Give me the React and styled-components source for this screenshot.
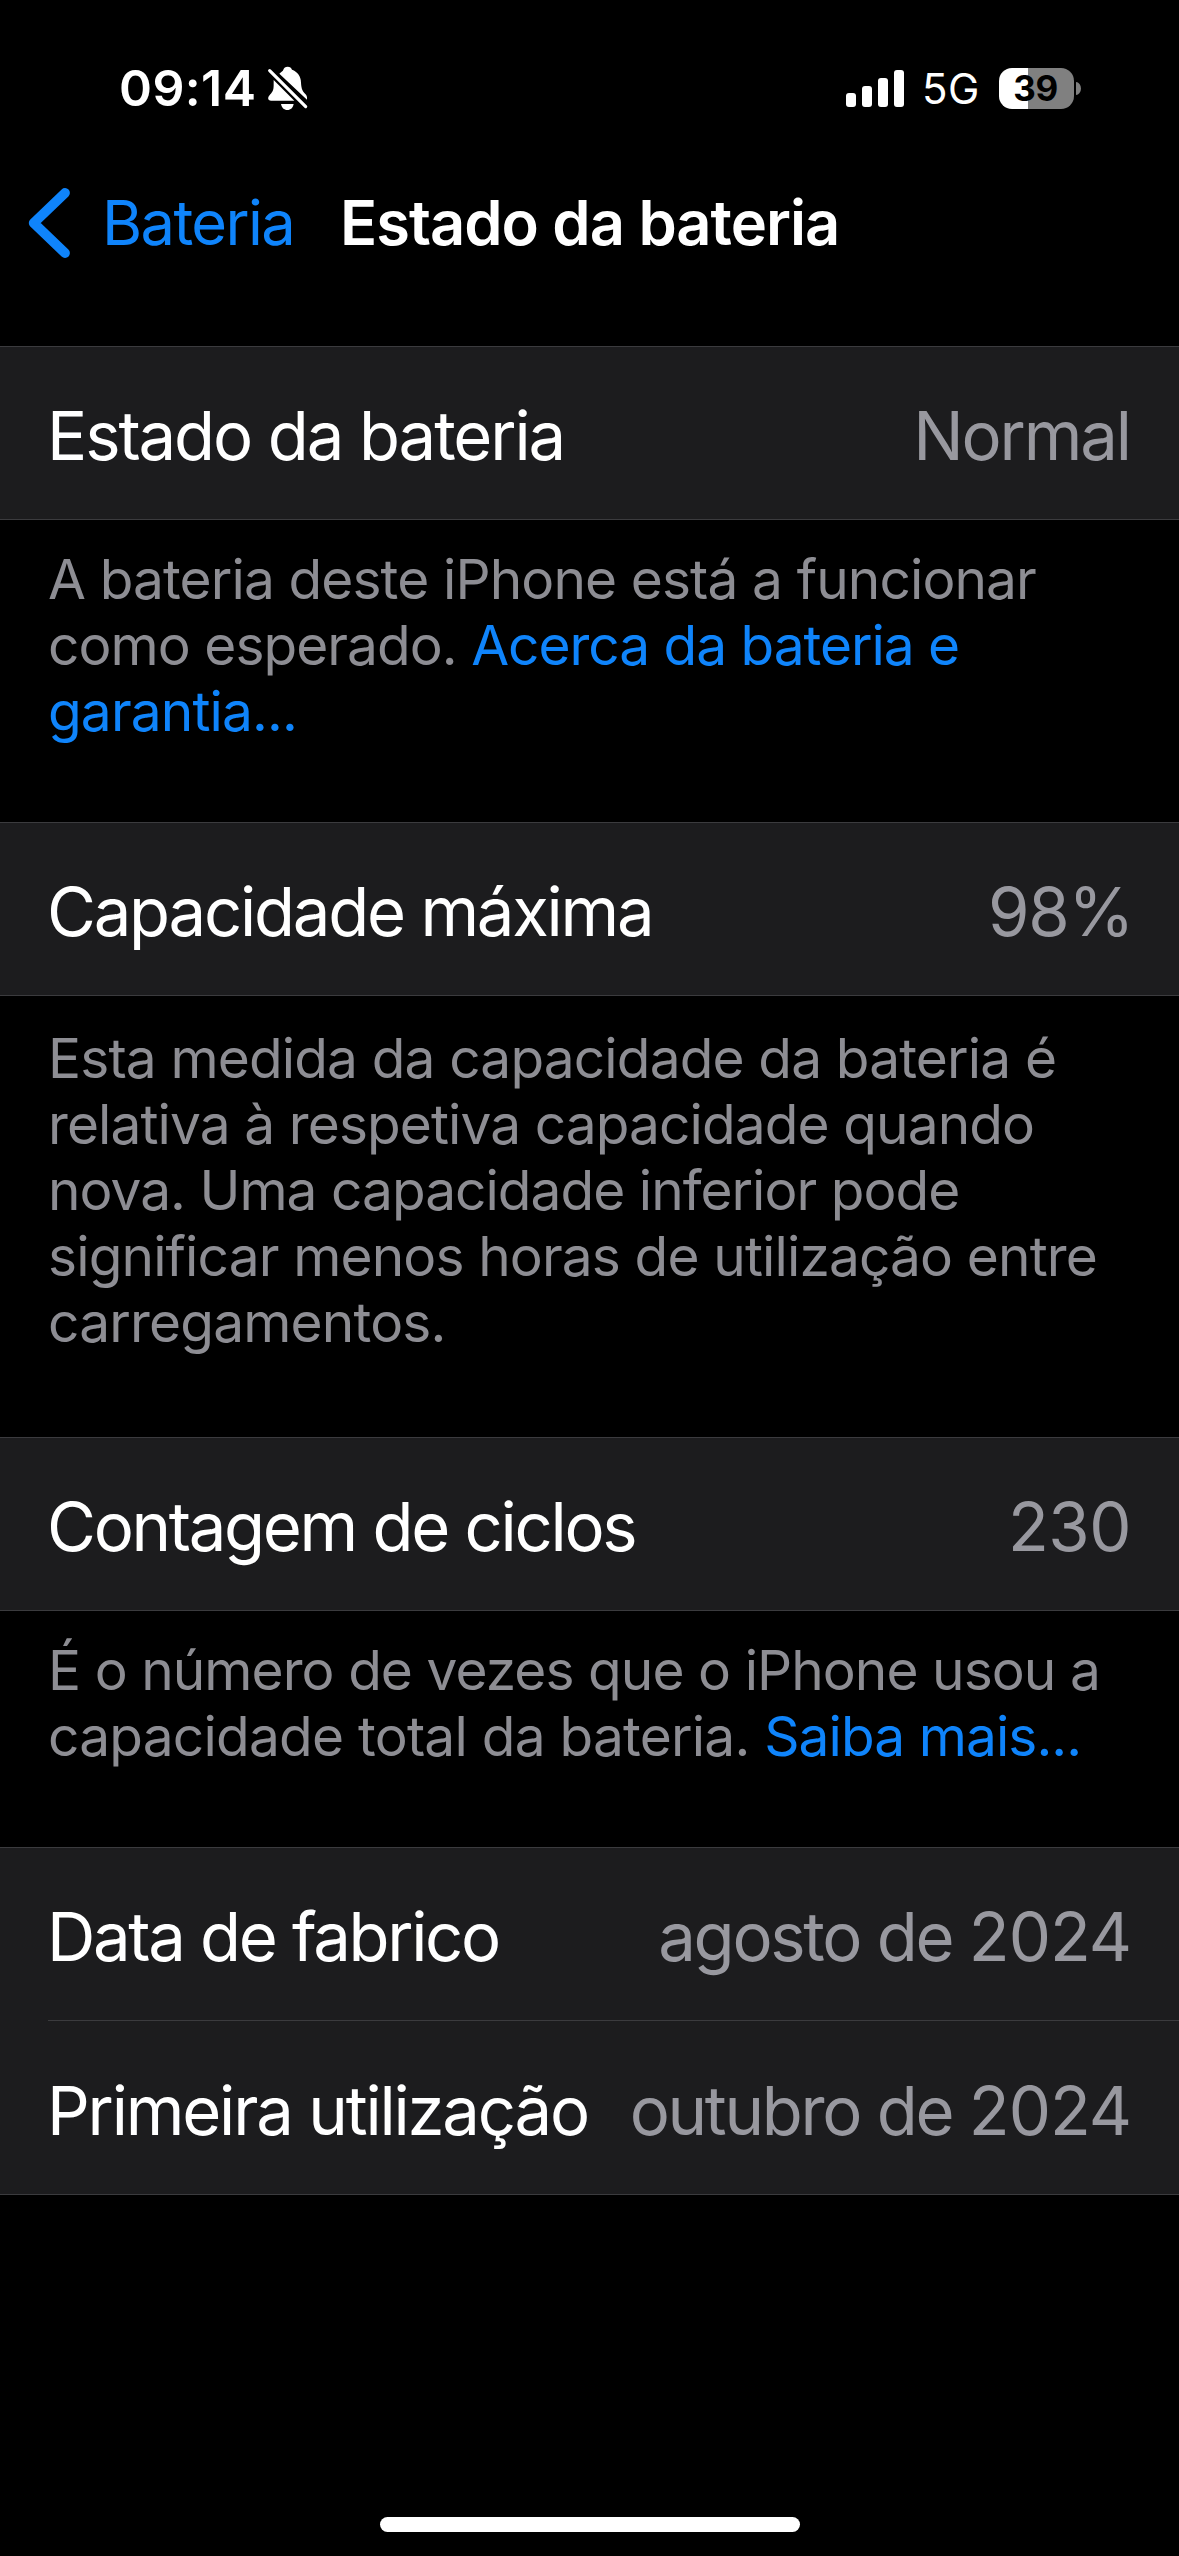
import React from "react";
import styled, { createGlobalStyle } from "styled-components";

const color = {
  bg: "#000000",
  cell: "#1c1c1e",
  separator: "#3b3b3e",
  text: "#ffffff",
  value: "#98989f",
  note: "#8d8d93",
  link: "#0f84fb",
};

const GlobalStyle = createGlobalStyle`
  * { box-sizing: border-box; }
  body {
    margin: 0;
    background: ${color.bg};
    color: ${color.text};
    font-family: Inter, "Liberation Sans", sans-serif;
  }
`;

const Screen = styled.div`
  display: flex;
  flex-direction: column;
  width: 1179px;
  height: 2556px;
  overflow: hidden;
  background: ${color.bg};
`;

/* Status bar */
const StatusBar = styled.header`
  flex: none;
  display: flex;
  align-items: center;
  justify-content: space-between;
  height: 176px;
  padding: 0 98px 0 119px;
`;

const StatusGroup = styled.div`
  display: flex;
  align-items: center;
`;

const Time = styled.span`
  width: 148px;
  font-size: 50px;
  font-weight: 600;
  letter-spacing: 0.4px;
`;

const Signal = styled.div`
  display: flex;
  align-items: flex-end;
  gap: 6px;
  height: 37px;
  margin-right: 18px;
`;

const SignalBar = styled.i`
  width: 10px;
  height: ${(p) => p.$height}px;
  border-radius: 3px;
  background: ${color.text};
`;

const Network = styled.span`
  width: 57px;
  margin-right: 20px;
  padding-top: 1px;
  font-size: 42px;
  letter-spacing: 0.4px;
`;

const BatteryBody = styled.div`
  display: flex;
  align-items: center;
  justify-content: center;
  width: 75px;
  height: 41px;
  padding-right: 2px;
  border-radius: 13px;
  background: linear-gradient(to right, #fff ${(p) => p.$level}%, #808080 ${(p) => p.$level}%);
  color: #000;
  font-size: 35px;
  font-weight: 700;
  letter-spacing: -0.5px;
`;

const BatteryCap = styled.i`
  width: 5px;
  height: 13px;
  margin-left: 2px;
  border-radius: 0 5px 5px 0 / 0 6.5px 6.5px 0;
  background: #808080;
`;

/* Navigation */
const NavBar = styled.nav`
  flex: none;
  display: flex;
  align-items: center;
  height: 170px;
  padding: 0 0 76px 28px;
  font-size: 61.4px;
  white-space: nowrap;
`;

const BackLink = styled.a`
  display: flex;
  align-items: center;
  gap: 32px;
  width: 312px;
  color: ${color.link};
  letter-spacing: -1.6px;
`;

const Title = styled.h1`
  margin: 0;
  font-size: inherit;
  font-weight: 600;
  letter-spacing: -0.99px;
`;

/* List */
const Group = styled.section`
  flex: none;
  border-top: 1px solid ${color.separator};
  border-bottom: 1px solid ${color.separator};
  background: ${color.cell};
`;

const Row = styled.div`
  display: flex;
  align-items: center;
  justify-content: space-between;
  height: ${(p) => p.$height || 172}px;
  margin-left: 48px;
  padding: 5px ${(p) => p.$inset || 49}px 0 0;
  font-size: 67px;
  white-space: nowrap;

  & + & {
    border-top: 1px solid ${color.separator};
  }
`;

const Label = styled.span`
  margin-left: -1px;
  letter-spacing: ${(p) => p.$track}px;
`;

const Value = styled.span`
  color: ${color.value};
  letter-spacing: ${(p) => p.$track || 0}px;
`;

const Digits = styled.span`
  letter-spacing: -1px;
`;

const Note = styled.p`
  flex: none;
  margin: 0;
  padding: ${(p) => (p.$roomy ? "29px 48px 82px" : "26px 48px 78px")};
  color: ${color.note};
  font-size: 55px;
  line-height: 66px;
`;

const NoteLine = styled.span`
  display: block;
  white-space: nowrap;
  letter-spacing: ${(p) => p.$track}px;
`;

const NoteLink = styled.a`
  color: ${color.link};
  letter-spacing: ${(p) => p.$track}px;
`;

const HomeArea = styled.footer`
  flex: 1;
  display: flex;
  align-items: flex-end;
  justify-content: center;
  padding: 0 0 24px 1px;
`;

const HomeIndicator = styled.div`
  width: 420px;
  height: 15px;
  border-radius: 8px;
  background: ${color.text};
`;

const BellSlash = () => (
  <svg width="41" height="46.7" viewBox="500 45 123 140" fill="#fff">
    <path d="M537 71C543 66 548 63 549 59C551 53 555 50 562 50C569 50 573 53 575 59C591 65 602 78 602 98C603 117 607 124 615 132C619 136 621 141 620 149Z" />
    <path d="M520 90L582 152H512C504 152 501 145 506 138C516 127 520 122 520 106Z" />
    <path d="M542 162H580C578 173 571 180 561 180C551 180 544 173 542 162Z" />
    <path d="M508 62L616 170" fill="none" stroke="#fff" strokeWidth="9.5" strokeLinecap="round" />
  </svg>
);

const Chevron = () => (
  <svg width="42" height="70" viewBox="0 0 42 70" fill="none">
    <path
      d="M37 5L5.7 35L37 65"
      stroke={color.link}
      strokeWidth="9.8"
      strokeLinecap="round"
      strokeLinejoin="round"
    />
  </svg>
);

export default function App() {
  return (
    <>
      <GlobalStyle />
      <Screen>
        <StatusBar>
          <StatusGroup>
            <Time>09:14</Time>
            <BellSlash />
          </StatusGroup>
          <StatusGroup>
            <Signal>
              {[14, 21, 29, 37].map((h) => (
                <SignalBar key={h} $height={h} />
              ))}
            </Signal>
            <Network>5G</Network>
            <BatteryBody $level={39}>39</BatteryBody>
            <BatteryCap />
          </StatusGroup>
        </StatusBar>

        <NavBar>
          <BackLink>
            <Chevron />
            Bateria
          </BackLink>
          <Title>Estado da bateria</Title>
        </NavBar>

        <Group>
          <Row>
            <Label $track={-2.1}>Estado da bateria</Label>
            <Value $track={-2.1}>Normal</Value>
          </Row>
        </Group>
        <Note>
          <NoteLine $track={-0.88}>A bateria deste iPhone está a funcionar</NoteLine>
          <NoteLine $track={-0.95}>
            como esperado. <NoteLink $track={-1.03}>Acerca da bateria e</NoteLink>
          </NoteLine>
          <NoteLine $track={-0.86}>
            <NoteLink $track={-0.86}>garantia...</NoteLink>
          </NoteLine>
        </Note>

        <Group>
          <Row $inset={46}>
            <Label $track={-2.23}>Capacidade máxima</Label>
            <Value $track={-1.3}>98%</Value>
          </Row>
        </Group>
        <Note $roomy>
          <NoteLine $track={-0.85}>Esta medida da capacidade da bateria é</NoteLine>
          <NoteLine $track={-0.9}>relativa à respetiva capacidade quando</NoteLine>
          <NoteLine $track={-0.97}>nova. Uma capacidade inferior pode</NoteLine>
          <NoteLine $track={-0.86}>significar menos horas de utilização entre</NoteLine>
          <NoteLine $track={-0.81}>carregamentos.</NoteLine>
        </Note>

        <Group>
          <Row $inset={48}>
            <Label $track={-2.3}>Contagem de ciclos</Label>
            <Value $track={-0.5}>230</Value>
          </Row>
        </Group>
        <Note>
          <NoteLine $track={-0.94}>É o número de vezes que o iPhone usou a</NoteLine>
          <NoteLine $track={-0.77}>
            capacidade total da bateria. <NoteLink $track={-0.93}>Saiba mais...</NoteLink>
          </NoteLine>
        </Note>

        <Group>
          <Row $inset={48}>
            <Label $track={-2.34}>Data de fabrico</Label>
            <Value $track={-2.3}>
              agosto de <Digits>2024</Digits>
            </Value>
          </Row>
          <Row $height={174} $inset={48}>
            <Label $track={-2.19}>Primeira utilização</Label>
            <Value $track={-2.3}>
              outubro de <Digits>2024</Digits>
            </Value>
          </Row>
        </Group>

        <HomeArea>
          <HomeIndicator />
        </HomeArea>
      </Screen>
    </>
  );
}
